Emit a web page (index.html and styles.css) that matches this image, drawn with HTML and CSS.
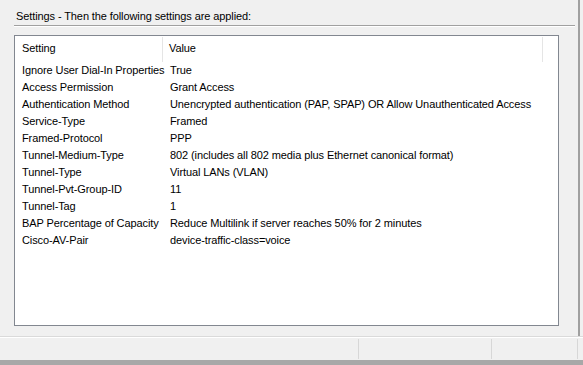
FILE: index.html
```html
<!DOCTYPE html>
<html>
<head>
<meta charset="utf-8">
<link rel="stylesheet" href="styles.css">
</head>
<body>
<div class="window">
  <div class="main">
    <div class="pane">
      <div class="title">Settings - Then the following settings are applied:</div>
      <div class="rule"></div>
      <div class="list">
        <div class="list-head">
          <div class="col-setting">Setting</div>
          <div class="col-value">Value</div>
          <div class="col-fill"></div>
        </div>
        <div class="rows">
          <div class="row"><span class="k">Ignore User Dial-In Properties</span><span class="v">True</span></div>
          <div class="row"><span class="k">Access Permission</span><span class="v">Grant Access</span></div>
          <div class="row"><span class="k">Authentication Method</span><span class="v">Unencrypted authentication (PAP, SPAP) OR Allow Unauthenticated Access</span></div>
          <div class="row"><span class="k">Service-Type</span><span class="v">Framed</span></div>
          <div class="row"><span class="k">Framed-Protocol</span><span class="v">PPP</span></div>
          <div class="row"><span class="k">Tunnel-Medium-Type</span><span class="v">802 (includes all 802 media plus Ethernet canonical format)</span></div>
          <div class="row"><span class="k">Tunnel-Type</span><span class="v">Virtual LANs (VLAN)</span></div>
          <div class="row"><span class="k">Tunnel-Pvt-Group-ID</span><span class="v">11</span></div>
          <div class="row"><span class="k">Tunnel-Tag</span><span class="v">1</span></div>
          <div class="row"><span class="k">BAP Percentage of Capacity</span><span class="v">Reduce Multilink if server reaches 50% for 2 minutes</span></div>
          <div class="row"><span class="k">Cisco-AV-Pair</span><span class="v">device-traffic-class=voice</span></div>
        </div>
      </div>
    </div>
    <div class="vbar"></div>
    <div class="edge"></div>
  </div>
  <div class="status">
    <div class="cell cell-wide"></div>
    <div class="cell cell-mid"></div>
    <div class="cell cell-end"></div>
    <div class="cell cell-last"></div>
  </div>
  <div class="bottom-bar"></div>
</div>
</body>
</html>
```

FILE: styles.css
```css
html, body {
  margin: 0;
  padding: 0;
}

body {
  width: 583px;
  height: 365px;
  overflow: hidden;
  background: #f0f0f0;
  font-family: "Liberation Sans", Arial, sans-serif;
  font-size: 11px;
  letter-spacing: -0.1px;
  color: #000;
}

.window {
  display: flex;
  flex-direction: column;
  height: 365px;
}

.main {
  display: flex;
  height: 336px;
  border-bottom: 1px solid #dadada;
}

.pane {
  width: 564px;
  padding-left: 14px;
  display: flex;
  flex-direction: column;
}

.title {
  height: 25px;
  padding-left: 2px;
  line-height: 15px;
  padding-top: 9px;
  box-sizing: border-box;
}

.rule {
  width: 561px;
  height: 1px;
  background: #a0a0a0;
  border-bottom: 1px solid #ffffff;
  margin-bottom: 8px;
}

.list {
  width: 543px;
  height: 289px;
  background: #fff;
  border: 1px solid #828790;
  display: flex;
  flex-direction: column;
}

.list-head {
  display: flex;
  height: 25px;
  padding-top: 1px;
}

.list-head > div {
  line-height: 23px;
}

.col-setting {
  width: 140px;
  padding-left: 7px;
  border-right: 1px solid #e5e5e5;
}

.col-value {
  width: 373px;
  padding-left: 6px;
  border-right: 1px solid #e5e5e5;
}

.col-fill {
  flex: 1;
}

.rows {
  padding-top: 0;
}

.row {
  display: flex;
  height: 17px;
  line-height: 17px;
  white-space: nowrap;
}

.row .k {
  width: 148px;
  padding-left: 7px;
  flex-shrink: 0;
}

.vbar {
  width: 2px;
  background: #a0a0a0;
}

.edge {
  flex: 1;
}

.status {
  display: flex;
  height: 23px;
  border-top: 1px solid #ffffff;
  box-sizing: border-box;
  padding-top: 1px;
}

.cell {
  height: 20px;
  border-right: 1px solid #d7d7d7;
}

.cell-wide { width: 358px; }
.cell-mid { width: 132px; }
.cell-end { width: 85px; }
.cell-last { flex: 1; border-right: none; }

.bottom-bar {
  flex: 1;
  background: #a8a8a8;
}
```
